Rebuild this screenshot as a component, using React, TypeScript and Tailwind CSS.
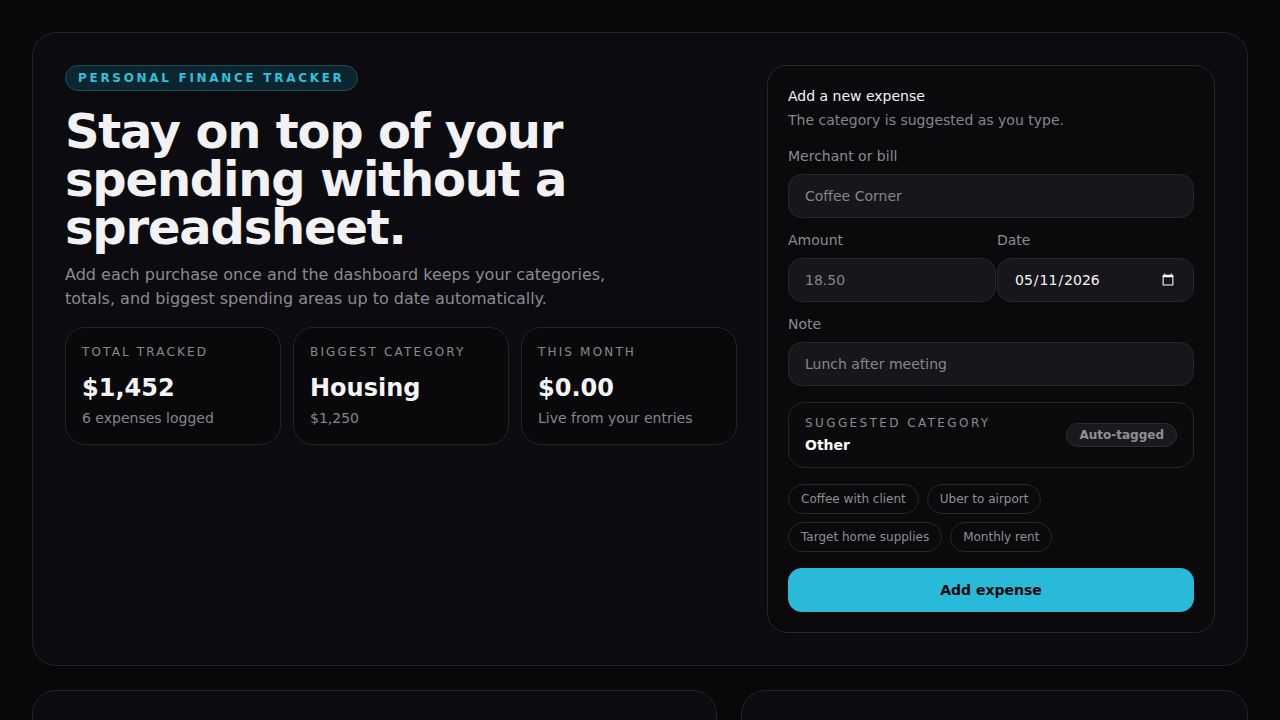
import { useState } from 'react'

const stats = [
  { label: 'Total tracked', value: '$1,452', sub: '6 expenses logged' },
  { label: 'Biggest category', value: 'Housing', sub: '$1,250' },
  { label: 'This month', value: '$0.00', sub: 'Live from your entries' },
]

const examples = [
  'Coffee with client',
  'Uber to airport',
  'Target home supplies',
  'Monthly rent',
]

const inputClass =
  'h-11 rounded-[14px] border border-[#26262b] bg-[#17171b] px-4 text-sm text-zinc-100 placeholder:text-[#85858c] outline-none'

export default function App() {
  const [date, setDate] = useState('2026-05-11')

  return (
    <div className="min-h-screen bg-[#08080a] p-8 font-['DejaVu_Sans',sans-serif] text-zinc-100">
      <div className="space-y-6">
        <section className="grid grid-cols-[672px_1fr] gap-[30px] rounded-[24px] border border-[#232328] bg-[#0c0c10] p-8">
          <div>
            <span className="inline-block rounded-full border border-[#1d4b57] bg-[#0c2630] px-3 py-1 text-xs font-bold uppercase leading-4 tracking-[0.225em] text-[#2fc0dc]">
              Personal finance tracker
            </span>
            <h1 className="mt-4 max-w-[540px] text-5xl font-bold leading-none tracking-tight text-[#f2f2f5]">
              Stay on top of your spending without a spreadsheet.
            </h1>
            <p className="mt-3 max-w-[580px] text-base leading-6 text-[#8a8a92]">
              Add each purchase once and the dashboard keeps your categories, totals, and biggest
              spending areas up to date automatically.
            </p>
            <div className="mt-4 grid grid-cols-3 gap-3">
              {stats.map((s) => (
                <div
                  key={s.label}
                  className="rounded-[20px] border border-[#232328] bg-[#09090c] p-4"
                >
                  <div className="text-xs uppercase leading-4 tracking-[0.18em] text-[#8a8a90]">
                    {s.label}
                  </div>
                  <div className="mt-3 text-2xl font-bold leading-8 text-[#f4f4f6]">{s.value}</div>
                  <div className="mt-1 text-sm leading-5 text-[#85858c]">{s.sub}</div>
                </div>
              ))}
            </div>
          </div>

          <div className="rounded-[20px] border border-[#26262b] bg-[#0a0a0d] p-5">
            <h2 className="text-sm leading-5 text-[#f2f2f5]">Add a new expense</h2>
            <p className="mt-1 text-sm leading-5 text-[#85858c]">
              The category is suggested as you type.
            </p>

            <label className="mt-4 block">
              <span className="block text-sm leading-5 text-[#8a8a90]">Merchant or bill</span>
              <input className={`mt-2 w-full ${inputClass}`} placeholder="Coffee Corner" />
            </label>

            <div className="mt-3 grid grid-cols-2 gap-3">
              <label className="block">
                <span className="block text-sm leading-5 text-[#8a8a90]">Amount</span>
                <input
                  className={`mt-2 w-[calc(100%+11px)] ${inputClass}`}
                  placeholder="18.50"
                  inputMode="decimal"
                />
              </label>
              <label className="block">
                <span className="block text-sm leading-5 text-[#8a8a90]">Date</span>
                <input
                  type="date"
                  value={date}
                  onChange={(e) => setDate(e.target.value)}
                  className={`mt-2 w-full ${inputClass} [color-scheme:dark]`}
                />
              </label>
            </div>

            <label className="mt-3 block">
              <span className="block text-sm leading-5 text-[#8a8a90]">Note</span>
              <input className={`mt-2 w-full ${inputClass}`} placeholder="Lunch after meeting" />
            </label>

            <div className="mt-4 flex items-center justify-between rounded-[16px] border border-[#232328] bg-[#0b0b0e] px-4 py-3">
              <div>
                <div className="text-xs uppercase leading-4 tracking-[0.2em] text-[#8a8a90]">
                  Suggested category
                </div>
                <div className="mt-1 text-sm font-bold leading-5 text-white">Other</div>
              </div>
              <span className="rounded-full border border-[#2a2a30] bg-[#1a1a1e] px-3 py-[3px] text-xs font-bold leading-4 text-[#8f8f96]">
                Auto-tagged
              </span>
            </div>

            <div className="mt-4 flex flex-wrap gap-2">
              {examples.map((e) => (
                <button
                  key={e}
                  type="button"
                  className="h-[30px] rounded-full border border-[#26262b] px-3 text-xs text-[#8e8e95]"
                >
                  {e}
                </button>
              ))}
            </div>

            <button
              type="button"
              className="mt-4 h-11 w-full rounded-[14px] bg-[#28bad8] text-sm font-bold text-[#0a0a0c]"
            >
              Add expense
            </button>
          </div>
        </section>

        <div className="grid grid-cols-[685px_1fr] gap-6">
          <section className="h-[320px] rounded-[24px] border border-[#232328] bg-[#0c0c10]" />
          <section className="h-[320px] rounded-[24px] border border-[#232328] bg-[#0c0c10]" />
        </div>
      </div>
    </div>
  )
}
